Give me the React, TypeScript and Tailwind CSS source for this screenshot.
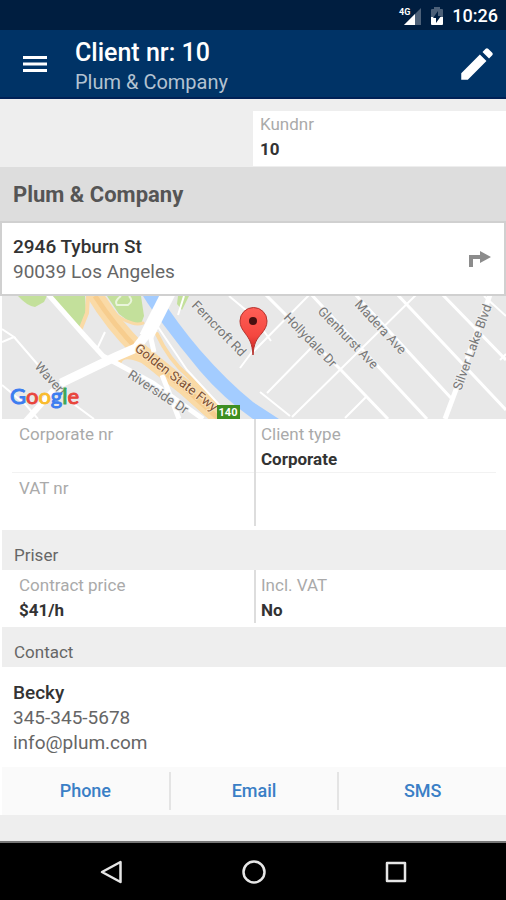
import type { ReactNode } from "react";

function StatusBar() {
  return (
    <div className="flex h-[30px] items-center justify-end bg-[#001e40] pt-[2px] pr-2 text-white">
      <svg className="mr-2 h-6 w-6" viewBox="0 0 24 24" aria-label="4G signal" role="img">
        <path d="M23 4v17H6z" fill="#fff" fillOpacity="0.3" />
        <path d="M17 10v11H6z" fill="#fff" />
        <text x="1" y="11" fontSize="9" fontWeight="700" fill="#fff" fontFamily="Roboto, sans-serif">
          4G
        </text>
      </svg>
      <svg className="mr-2 h-5 w-[14px]" viewBox="0 0 14 20" aria-label="Battery charging" role="img">
        <path d="M4 1h6v2h2q1 0 1 1v7H1V4q0-1 1-1h2z" fill="#fff" fillOpacity="0.3" />
        <path d="M1 11h12v7q0 1-1 1H2q-1 0-1-1z" fill="#fff" />
        <path d="M8 5v5h3l-5 7v-5H3z" fill="#001e40" />
      </svg>
      <span className="text-lg leading-6 font-medium">10:26</span>
    </div>
  );
}

function Header() {
  return (
    <header className="flex h-[69px] items-center border-b-2 border-[#002156] bg-[#003366] pl-5 text-white">
      <button type="button" aria-label="Menu" className="flex h-[30px] w-[30px] items-center justify-center">
        <svg className="h-[18px] w-6" viewBox="0 0 24 18">
          <path d="M0 2.500h24M0 9h24M0 15.500h24" stroke="#fff" strokeWidth="3" />
        </svg>
      </button>
      <div className="ml-[25px] min-w-0 flex-1 pt-[7px]">
        <h1 className="text-[25px] leading-[30px] font-medium">Client nr: 10</h1>
        <p className="text-xl leading-7 text-[#b3c2d1]">Plum &amp; Company</p>
      </div>
      <button type="button" aria-label="Edit" className="mr-2 flex h-[42px] w-[42px] items-center justify-center">
        <svg className="h-[42px] w-[42px]" viewBox="0 0 24 24" fill="#fff">
          <path d="M3 17.25V21h3.75L17.4 10.350l-3.75-3.750L3 17.25zM20.71 7.04a1 1 0 0 0 0-1.41l-2.34-2.34a1 1 0 0 0-1.41 0l-1.83 1.83 3.75 3.75 1.83-1.83z" />
        </svg>
      </button>
    </header>
  );
}

function Field({ label, children }: { label: string; children?: ReactNode }) {
  return (
    <dl className="text-[17px] leading-[25px]">
      <dt className="text-[#aaa]">{label}</dt>
      <dd className="min-h-[25px] font-bold text-[#333]">{children}</dd>
    </dl>
  );
}

function SectionTitle({ children }: { children: ReactNode }) {
  return (
    <h3 className="bg-[#eee] px-3 pt-[13px] pb-[3px] text-[17px] leading-6 text-[#666]">{children}</h3>
  );
}

const streets = [
  { x: 191, y: 306, angle: 46, name: "Ferncroft Rd" },
  { x: 283, y: 318, angle: 46, name: "Hollydale Dr" },
  { x: 317, y: 312, angle: 46, name: "Glenhurst Ave" },
  { x: 354, y: 305, angle: 47, name: "Madera Ave" },
  { x: 461, y: 391, angle: -70, name: "Silver Lake Blvd" },
  { x: 127, y: 377, angle: 33, name: "Riverside Dr" },
  { x: 34, y: 367, angle: 48, name: "Waverl" },
];

function StreetMap() {
  return (
    <svg
      className="block h-[123px] w-full bg-[#e8e8e8]"
      viewBox="2 296 504 123"
      preserveAspectRatio="xMidYMid slice"
      role="img"
      aria-label="Map"
      fontFamily="Roboto, sans-serif"
    >
      <defs>
        <linearGradient id="pin" x1="0" y1="0" x2="0" y2="1">
          <stop offset="0" stopColor="#ff5f57" />
          <stop offset="0.6" stopColor="#f4473f" />
          <stop offset="1" stopColor="#c01f1f" />
        </linearGradient>
      </defs>
      <rect x="2" y="296" width="504" height="123" fill="#e8e8e8" />
      <path d="M18 296h29l-3 6-9 5q-8-1-17-11z" fill="#c3e09b" />
      <path d="M52 296h33l1 15-5 18-29-33z" fill="#c3e09b" />
      <path d="M107 296h34l3 20-3 8-10-1-12-9z" fill="#c3e09b" />
      <path d="M178 296h11l-7 14-5-6z" fill="#c3e09b" />
      <path d="M121 296q-7 5-4 9h11q6-4 1-9" fill="none" stroke="#eaf5dc" strokeWidth="2" />

      <path d="M143 296h17q17 27 40 54 27 31 53 52l26 17h-26q-30-21-53-48-20-24-37-47-12-15-20-28z" fill="#a3ccff" />

      <g fill="none" stroke="#fadaa6" strokeLinecap="round">
        <path d="M88 296l-1 17-6 15" strokeWidth="4" />
        <path d="M106 306q14 14 26 17 6 2 11 0" strokeWidth="3" />
        <path d="M157 334q12 26 31 42l32 32" strokeWidth="4" />
        <path d="M119 362q4-10 24-1l25 18 40 36" strokeWidth="5" />
        <path d="M92 290q20 34 47 60 26 22 48 39l38 34" strokeWidth="16" />
      </g>
      <path d="M95 296q18 28 44 55 26 22 48 39l32 29" fill="none" stroke="#f7cd8e" strokeWidth="5" />

      <g fill="none" stroke="#fff">
        <path d="M46 292l37 42 20 22 50 27 50 36" strokeWidth="5" />
        <path d="M170 290l-24 47" strokeWidth="14" />
        <path d="M150 330l-14 18-21 9-54 26" strokeWidth="9" />
        <path d="M66 380l-14 12-27 30" strokeWidth="6" />
        <path d="M149 330l5 22M162 375l8 20 9 24" strokeWidth="5" />
        <path d="M2 342l12-5-12-8M14 337l25 29 28 33 27 20M2 385l24 20 12 14M97 349l8-17" strokeWidth="2" />
        <path d="M158 327l29 43 37 40M184 296l-6 19M229 296l24 20 18 25M253 352l60-61M240 368l15-20" strokeWidth="2" />
        <path d="M265 294l76 76 47 49M309 292l118 127M353 292l98 106M395 292l111 118M440 292l66 68" strokeWidth="3" />
        <path d="M267 393l46-47M292 417l127-125M345 418l22-22M500 360l6-6M484 296l22 20M260 392l30 24" strokeWidth="2" />
        <path d="M491 292l-31 87-15 40" strokeWidth="5" />
      </g>

      <g stroke="#eee" strokeWidth="2" strokeLinejoin="round" paintOrder="stroke" fill="#777" fontSize="13">
        {streets.map((s) => (
          <text key={s.name} transform={`translate(${s.x} ${s.y}) rotate(${s.angle})`}>
            {s.name}
          </text>
        ))}
        <text transform="translate(134 350) rotate(38)" fill="#7b4f32" stroke="#fbe3bd">
          Golden State Fwy
        </text>
      </g>

      <path d="M217 405h23v14h-23z" fill="#3f8f22" />
      <text x="228" y="416" textAnchor="middle" fill="#fff" fontSize="11" fontWeight="700">
        140
      </text>

      <path
        d="M253 355c-1-12-3-15-8-22-3-4-5-7-5-12a13.500 13.500 0 0 1 27 0c0 5-2 8-5 12-6 7-8 10-9 22z"
        fill="url(#pin)"
        stroke="#b5322d"
      />
      <circle cx="253" cy="321" r="4" fill="#471010" />

      <text x="10" y="404" fontSize="22" fontFamily="Lato, sans-serif">
        <tspan fill="#3c7df0" stroke="#3c7df0">G</tspan>
        <tspan fill="#e8453c" stroke="#e8453c">o</tspan>
        <tspan fill="#f9bb2d" stroke="#f9bb2d">o</tspan>
        <tspan fill="#3c7df0" stroke="#3c7df0">g</tspan>
        <tspan fill="#3aa757" stroke="#3aa757">l</tspan>
        <tspan fill="#e8453c" stroke="#e8453c">e</tspan>
      </text>
    </svg>
  );
}

function ContactActions() {
  return (
    <div className="flex divide-x-2 divide-[#e4e4e4] bg-[#fafafa] py-[5px] text-lg leading-[38px] font-medium text-[#3a7fc6]">
      <button type="button" className="flex-1">Phone</button>
      <button type="button" className="flex-1">Email</button>
      <button type="button" className="flex-1">SMS</button>
    </div>
  );
}

function NavigationBar() {
  return (
    <nav className="flex h-[59px] items-center justify-center gap-[118px] border-t-2 border-[#777] bg-black pl-[2px]">
      <button type="button" aria-label="Back">
        <svg className="h-6 w-6" viewBox="0 0 24 24" fill="none" stroke="#e6e6e6" strokeWidth="2.500" strokeLinejoin="round">
          <path d="M20.500 2v20L2 12z" />
        </svg>
      </button>
      <button type="button" aria-label="Home">
        <svg className="h-6 w-6" viewBox="0 0 24 24" fill="none" stroke="#e6e6e6" strokeWidth="2.500">
          <circle cx="12" cy="12" r="10.500" />
        </svg>
      </button>
      <button type="button" aria-label="Recent apps">
        <svg className="h-6 w-6" viewBox="0 0 24 24" fill="none" stroke="#e6e6e6" strokeWidth="2.500" strokeLinejoin="round">
          <path d="M3 3h18v18H3z" />
        </svg>
      </button>
    </nav>
  );
}

export default function App() {
  return (
    <div className="flex min-h-screen flex-col bg-[#eee] font-[Roboto,sans-serif]">
      <StatusBar />
      <Header />

      <main className="flex-1">
        <div className="flex justify-end pt-3">
          <div className="w-1/2 bg-white px-[7px] pt-px pb-1">
            <Field label="Kundnr">10</Field>
          </div>
        </div>

        <h2 className="mt-px bg-[#ddd] px-[13px] pt-[13px] pb-[11px] text-[22px] leading-[30px] font-bold text-[#555]">
          Plum &amp; Company
        </h2>

        <address className="flex items-center justify-between border-2 border-[#d0d0d0] bg-white pt-[11px] pr-3 pb-[10px] pl-[11px] text-[19px] leading-[25px] text-[#666] not-italic">
          <div>
            <p className="font-medium text-[#333]">2946 Tyburn St</p>
            <p>90039 Los Angeles</p>
          </div>
          <button type="button" aria-label="Directions">
            <svg className="h-6 w-6" viewBox="0 0 24 24" fill="#8c8c8c">
              <path d="M1 20V8h11V4l11 6-11 6v-4H5v8z" />
            </svg>
          </button>
        </address>

        <div className="bg-white pl-[2px]">
          <StreetMap />

          <section className="grid grid-cols-2 pb-1">
            <div>
              <div className="ml-[10px] border-b border-[#f2f2f2] pt-[3px] pl-[7px]">
                <Field label="Corporate nr" />
              </div>
              <div className="pt-[3px] pl-[17px]">
                <Field label="VAT nr" />
              </div>
            </div>
            <div className="border-l-2 border-[#ddd]">
              <div className="mr-[10px] border-b border-[#f2f2f2] pt-[3px] pl-[5px]">
                <Field label="Client type">Corporate</Field>
              </div>
            </div>
          </section>

          <SectionTitle>Priser</SectionTitle>
          <section className="grid grid-cols-2 pb-1">
            <div className="pt-[3px] pl-[17px]">
              <Field label="Contract price">$41/h</Field>
            </div>
            <div className="border-l-2 border-[#ddd] pt-[3px] pl-[5px]">
              <Field label="Incl. VAT">No</Field>
            </div>
          </section>

          <SectionTitle>Contact</SectionTitle>
          <section>
            <div className="px-[11px] pt-[13px] pb-3 text-[19px] leading-[25px] text-[#666]">
              <p className="font-medium text-[#333]">Becky</p>
              <p>345-345-5678</p>
              <p>info@plum.com</p>
            </div>
            <ContactActions />
          </section>
        </div>
      </main>

      <NavigationBar />
    </div>
  );
}
